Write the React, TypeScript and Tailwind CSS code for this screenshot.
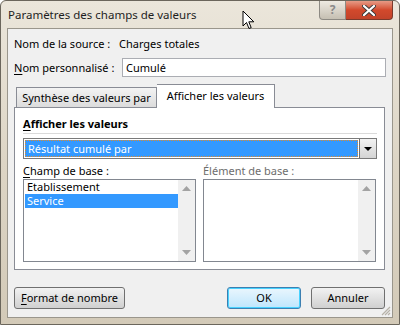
import React from 'react';

const font = { fontFamily: '"Noto Sans", "Open Sans", sans-serif' };

function U({ children }: { children: React.ReactNode }) {
  return <span className="underline underline-offset-2">{children}</span>;
}

function ScrollBar() {
  return (
    <div className="flex w-[17px] flex-col items-center justify-between bg-[#f0f0f0] py-[6px]">
      <svg width="9" height="5" viewBox="0 0 9 5">
        <path d="M0 5 L4.5 0 L9 5 Z" fill="#a3a3a3" />
      </svg>
      <svg width="9" height="5" viewBox="0 0 9 5">
        <path d="M0 0 L4.5 5 L9 0 Z" fill="#a3a3a3" />
      </svg>
    </div>
  );
}

function Cursor() {
  return (
    <svg className="absolute left-[241px] top-[9px]" width="14" height="21" viewBox="0 0 14 21">
      <path
        d="M1 1 L1 16 L4.5 12.5 L7 18.5 L9.2 17.6 L6.8 11.8 L11.8 11.8 Z"
        fill="white"
        stroke="black"
        strokeWidth="1"
        strokeLinejoin="round"
      />
    </svg>
  );
}

export default function App() {
  return (
    <div
      className="relative h-[325px] w-[400px] overflow-hidden whitespace-nowrap rounded-t-[6px] border border-[#6b665c] bg-gradient-to-b from-[#ebe6db] via-[#ddd5c5] to-[#d3cab8] text-[11px] leading-[14px] text-black"
      style={font}
    >
      {/* title bar */}
      <div className="flex h-[27px] items-start">
        <div className="pl-[7px] pt-[7px] text-[11.5px] leading-[14px] text-[#1e1e1e]">Paramètres des champs de valeurs</div>
        <div className="ml-auto mr-[6px] flex">
          <div className="flex h-[19px] w-[27px] items-center justify-center rounded-bl-[4px] border border-t-0 border-[#8d8a83] bg-gradient-to-b from-[#eeeae2] to-[#c5bfb2] text-[12px] font-bold text-[#8a8a8a]">
            ?
          </div>
          <div className="flex h-[19px] w-[47px] items-center justify-center rounded-br-[4px] border border-l-0 border-t-0 border-[#7a3a2c] bg-gradient-to-b from-[#e69a85] via-[#d2492c] to-[#c2432a]">
            <svg width="14" height="11" viewBox="0 0 14 11">
              <path d="M2 1 L12 10 M12 1 L2 10" stroke="#3a3a3a" strokeWidth="4" strokeLinecap="round" />
              <path d="M2 1 L12 10 M12 1 L2 10" stroke="white" strokeWidth="2.2" strokeLinecap="round" />
            </svg>
          </div>
        </div>
      </div>

      {/* client area */}
      <div className="mx-[6px] flex h-[290px] flex-col border border-[#9a968c] bg-[#f0f0f0] px-[6px]">
        <div className="mt-[6px] flex h-[18px] items-center">
          <span className="w-[105px]">Nom de la source :</span>
          <span>Charges totales</span>
        </div>

        <div className="mt-[5px] flex items-center">
          <span className="w-[108px]">
            <U>N</U>om personnalisé :
          </span>
          <div className="flex h-[19px] w-[264px] items-center border border-[#abadb3] bg-white px-[3px]">Cumulé</div>
        </div>

        {/* tabs */}
        <div className="mt-[6px] flex h-[24px] items-end pl-[2px]">
          <div className="flex h-[20px] w-[141px] items-center justify-center border border-b-0 border-[#898c95] bg-gradient-to-b from-[#f3f3f3] to-[#dcdcdc]">
            Synthèse des valeurs par
          </div>
          <div className="relative z-10 -mb-px flex h-[24px] w-[118px] items-center justify-center border border-b-0 border-l-0 border-[#898c95] bg-white pb-[2px]">
            Afficher les valeurs
          </div>
        </div>

        <div className="h-[163px] w-[371px] border border-[#898c95] bg-white px-[8px] pt-[8px]">
          <div className="flex h-[16px] items-center font-bold">
            <U>A</U>fficher les valeurs
          </div>
          <div className="mt-[1px] h-px w-[354px] bg-[#dadada]" />
          <div className="mt-[4px] flex h-[21px] w-[354px] border border-[#7a7a7a] bg-white">
            <div className="m-[1px] flex flex-1 items-center border border-dotted border-[#e08a2a] bg-[#3399ff] px-[2px] text-white">
              Résultat cumulé par
            </div>
            <div className="flex w-[17px] items-center justify-center border-l border-[#707070] bg-gradient-to-b from-[#f2f2f2] to-[#d4d4d4]">
              <svg width="8" height="4" viewBox="0 0 8 4">
                <path d="M0 0 L8 0 L4 4 Z" fill="black" />
              </svg>
            </div>
          </div>

          <div className="mt-[4px] flex">
            <div className="w-[182px]">
              <div className="flex h-[16px] items-center">
                <U>C</U>hamp de base :
              </div>
              <div className="flex h-[83px] w-[173px] border border-[#828790] bg-white">
                <div className="flex-1 pl-[1px]">
                  <div className="flex h-[14px] items-center px-[2px]">Etablissement</div>
                  <div className="flex h-[14px] items-center bg-[#3399ff] px-[2px] text-white">Service</div>
                </div>
                <ScrollBar />
              </div>
            </div>
            <div>
              <div className="flex h-[16px] items-center text-[#6d6d6d]">Élément de base :</div>
              <div className="flex h-[83px] w-[173px] border border-[#828790] bg-white">
                <div className="flex-1" />
                <ScrollBar />
              </div>
            </div>
          </div>
        </div>

        {/* buttons */}
        <div className="mt-[17px] flex">
          <button className="flex h-[22px] w-[111px] items-center justify-center rounded-[3px] border border-[#707070] bg-gradient-to-b from-[#f2f2f2] to-[#d0d0d0]">
            <U>F</U>ormat de nombre
          </button>
          <button className="ml-auto flex h-[22px] w-[74px] items-center justify-center rounded-[3px] border border-[#3c7fb1] bg-gradient-to-b from-[#eaf6fd] to-[#bee6fd] shadow-[inset_0_0_0_1px_#48d2ff]">
            OK
          </button>
          <button className="ml-[10px] mr-[1px] flex h-[22px] w-[74px] items-center justify-center rounded-[3px] border border-[#707070] bg-gradient-to-b from-[#f2f2f2] to-[#d0d0d0]">
            Annuler
          </button>
        </div>
      </div>

      {/* resize grip */}
      <svg className="absolute bottom-[8px] right-[8px]" width="10" height="10" viewBox="0 0 10 10">
        <path d="M9 1 L1 9 M9 4 L4 9 M9 7 L7 9" stroke="#b7b2a8" strokeWidth="1.2" />
      </svg>

      <Cursor />
    </div>
  );
}
